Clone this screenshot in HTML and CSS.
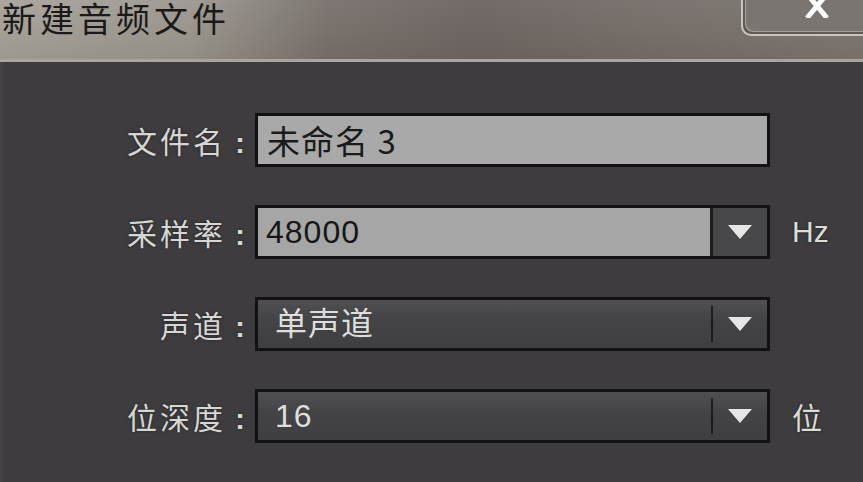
FILE: index.html
```html
<!DOCTYPE html>
<html lang="zh-CN">
<head>
    <meta charset="UTF-8">
    <meta name="viewport" content="width=device-width, initial-scale=1.0">
    <title>新建音频文件</title>
    <link rel="stylesheet" href="styles.css">
</head>
<body>
    <header class="titlebar">
        <div class="title">新建音频文件</div>
        <button class="close-btn" title="关闭">
            <svg width="28" height="24" viewBox="0 0 28 24">
                <path d="M4 0 L24 24 M24 0 L4 24" stroke="#fff" stroke-width="5" fill="none"/>
            </svg>
        </button>
    </header>

    <div class="dialog-body">
        <div class="form">
            <!-- 文件名 -->
            <label class="field-label">文件名<span class="colon">:</span></label>
            <div class="text-input">未命名 3</div>
            <div class="unit"></div>

            <!-- 采样率 -->
            <label class="field-label">采样率<span class="colon">:</span></label>
            <div class="combo combo-editable">
                <div class="combo-value">48000</div>
                <div class="combo-btn"><div class="arrow"></div></div>
            </div>
            <div class="unit">Hz</div>

            <!-- 声道 -->
            <label class="field-label">声道<span class="colon">:</span></label>
            <div class="combo">
                <div class="combo-value">单声道</div>
                <div class="combo-btn"><div class="arrow"></div></div>
            </div>
            <div class="unit"></div>

            <!-- 位深度 -->
            <label class="field-label">位深度<span class="colon">:</span></label>
            <div class="combo">
                <div class="combo-value">16</div>
                <div class="combo-btn"><div class="arrow"></div></div>
            </div>
            <div class="unit">位</div>
        </div>
    </div>
</body>
</html>
```

FILE: styles.css
```css
* {
    margin: 0;
    padding: 0;
    box-sizing: border-box;
    font-family: "Liberation Sans", "Noto Sans CJK SC", sans-serif;
}

body {
    background-color: #3e3c3e;
    height: 100vh;
    overflow: hidden;
    display: flex;
    flex-direction: column;
}

/* title bar */
.titlebar {
    height: 62px;
    flex-shrink: 0;
    display: flex;
    justify-content: space-between;
    align-items: flex-start;
    background:
        linear-gradient(to bottom, rgba(255, 255, 255, 0.06), rgba(90, 85, 60, 0.12)),
        linear-gradient(to right, #a6a29b 0%, #9b968f 22%, #766f6b 38%, #6a6260 55%, #736c68 75%, #7a746f 100%);
    border-bottom: 3px solid #aaa59f;
}

.title {
    font-family: "Noto Sans CJK SC", sans-serif;
    font-size: 34px;
    line-height: 1;
    letter-spacing: 4px;
    color: #1b1a19;
    padding: 0 0 0 2px;
    margin-top: 1px;
}

.close-btn {
    flex-shrink: 0;
    width: 132px;
    height: 50px;
    margin-top: -14px;
    margin-right: -10px;
    background-color: #7b7571;
    border: 2px solid #c9c4bd;
    border-top: none;
    border-right: none;
    border-bottom-left-radius: 10px;
    box-shadow: inset 2px -2px 0 #5f5a56, inset 3px -3px 0 #a39e97;
    display: flex;
    align-items: flex-start;
    padding: 8px 0 0 60px;
    cursor: pointer;
}

/* form */
.dialog-body {
    flex-grow: 1;
    border-left: 3px solid #444246;
}

.form {
    display: grid;
    grid-template-columns: 242px 515px auto;
    grid-auto-rows: 54px;
    column-gap: 10px;
    row-gap: 38px;
    padding-top: 51px;
}

.field-label {
    font-family: "Noto Sans CJK SC", sans-serif;
    font-size: 30px;
    letter-spacing: 3px;
    color: #d6d6d6;
    text-shadow: 0 0 3px #222;
    text-align: right;
    align-self: center;
    white-space: nowrap;
}

.colon {
    margin-left: 9px;
    font-family: "Liberation Sans", sans-serif;
    font-weight: bold;
    letter-spacing: 0;
}

.text-input {
    border: 3px solid #121212;
    background-color: #a9a9a9;
    color: #1a1a1a;
    font-family: "Noto Sans CJK SC", sans-serif;
    font-size: 33px;
    line-height: 48px;
    padding-left: 9px;
    letter-spacing: 1px;
}

.combo {
    border: 3px solid #121212;
    background: linear-gradient(to bottom, #505052, #444345 40%, #3f3e40);
    display: flex;
}

.combo-value {
    flex-grow: 1;
    color: #dedede;
    font-size: 32px;
    padding-left: 17px;
    letter-spacing: 1px;
    border-right: 2px solid #1c1c1c;
    margin: 6px 0;
    line-height: 36px;
}

.combo-editable .combo-value {
    background-color: #a6a6a6;
    color: #161616;
    padding-left: 8px;
    margin: 0;
    line-height: 48px;
    border-right-width: 3px;
}

.combo-editable .combo-btn {
    background-color: #474648;
}

.combo-btn {
    width: 54px;
    display: flex;
    align-items: center;
    justify-content: center;
}

.arrow {
    width: 0;
    height: 0;
    border-left: 12px solid transparent;
    border-right: 12px solid transparent;
    border-top: 14px solid #e6e6e6;
}

.unit {
    align-self: center;
    padding-left: 12px;
    font-family: "Liberation Sans", "Noto Sans CJK SC", sans-serif;
    font-size: 30px;
    color: #dcdcdc;
    text-shadow: 0 0 3px #222;
}
```
